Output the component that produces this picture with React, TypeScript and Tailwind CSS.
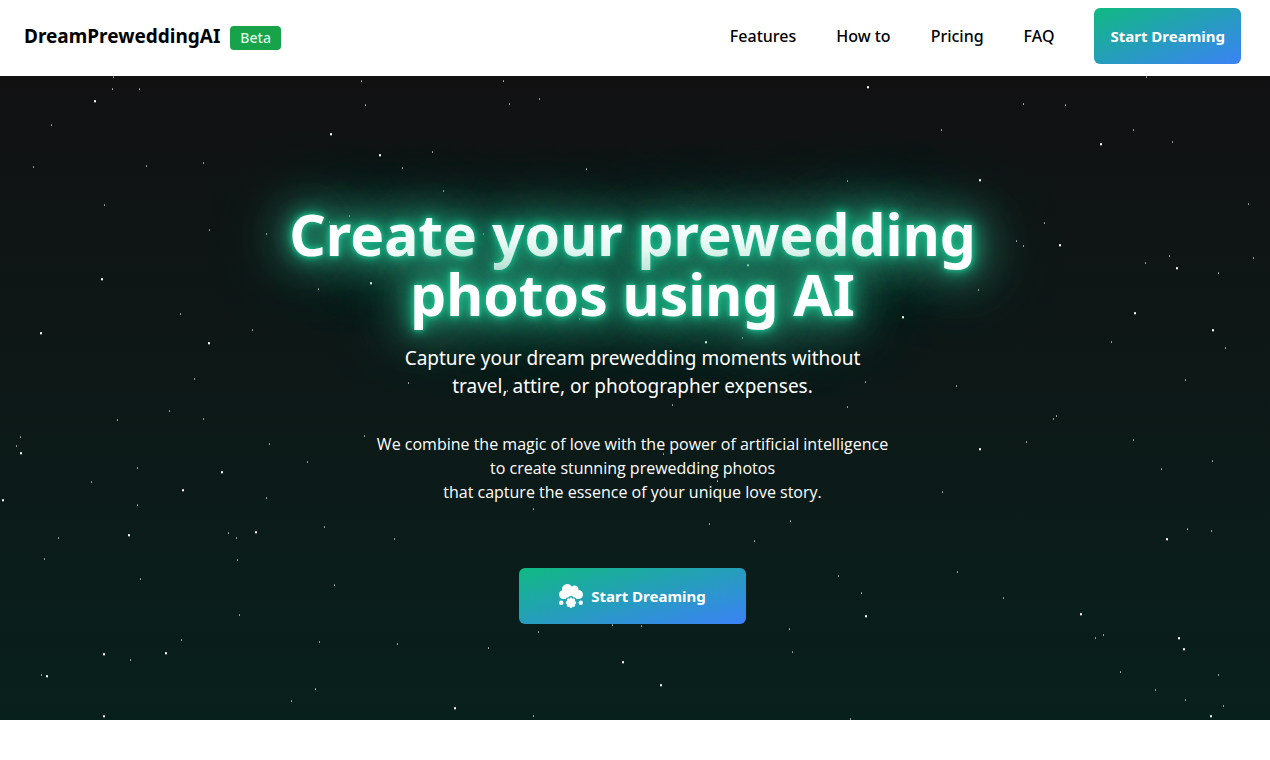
import { FaCloudMeatball } from "react-icons/fa6";

const links = [
  { label: "Features", href: "#features" },
  { label: "How to", href: "#how-to" },
  { label: "Pricing", href: "#pricing" },
  { label: "FAQ", href: "#faq" },
];

// x, y inside the hero
const smallStars = [
  [113, 0], [112, 12], [139, 12], [361, 4], [365, 28], [51, 48], [33, 90], [146, 89], [203, 86], [402, 91],
  [104, 128], [209, 153], [266, 157], [349, 139], [329, 145], [503, 4], [539, 22], [509, 27], [432, 75],
  [586, 92], [443, 114], [483, 157], [579, 242], [318, 212], [1016, 164], [978, 213], [742, 261], [180, 237],
  [252, 253], [194, 302], [408, 306], [169, 334], [203, 342], [117, 343], [20, 360], [16, 369], [269, 367],
  [364, 359], [307, 385], [137, 391], [91, 405], [266, 421], [137, 428], [58, 461], [228, 456], [236, 461],
  [324, 450], [394, 462], [44, 482], [237, 483], [140, 502], [334, 508], [239, 538], [181, 563], [319, 565],
  [397, 567], [130, 583], [41, 598], [315, 612], [291, 624], [1146, 0], [1023, 27], [1065, 28], [941, 53],
  [1133, 53], [1172, 65], [1248, 127], [1044, 146], [1023, 169], [847, 104], [1145, 186], [1169, 179],
  [1218, 196], [1253, 181], [1111, 265], [1225, 271], [865, 305], [956, 309], [1185, 303], [1056, 339],
  [1053, 342], [1026, 365], [1133, 363], [1161, 392], [1212, 384], [942, 415], [1187, 452], [1211, 454],
  [957, 495], [861, 516], [1003, 521], [1095, 561], [1103, 558], [1120, 595], [1155, 613], [1218, 598],
  [1185, 623], [1223, 629], [850, 642], [672, 328], [847, 330], [507, 314], [663, 377], [717, 404],
  [664, 411], [533, 432], [709, 447], [790, 444], [754, 464], [838, 499], [612, 548], [641, 549],
  [538, 555], [488, 571], [789, 552], [792, 575], [533, 639],
];

const bigStars = [
  [94, 24], [330, 57], [379, 78], [747, 188], [902, 240], [705, 265], [101, 202], [208, 266], [40, 256],
  [370, 206], [20, 376], [221, 395], [182, 413], [2, 423], [128, 458], [255, 455], [103, 577], [165, 576],
  [46, 599], [103, 639], [867, 10], [1100, 67], [979, 103], [1059, 168], [1176, 191], [1134, 236],
  [1212, 253], [979, 372], [1166, 462], [865, 539], [1080, 537], [1178, 561], [1183, 572], [1210, 639],
  [622, 585], [660, 608], [454, 631],
];

const Stars = () => (
  <svg className="absolute inset-0 h-full w-full" fill="#fff" shapeRendering="crispEdges" aria-hidden="true">
    {smallStars.map(([x, y]) => (
      <g key={`${x}-${y}`}>
        <rect x={x} y={y} width="1" height="1" opacity="0.5" />
        <rect x={x} y={y + 1} width="1" height="1" opacity="0.6" />
      </g>
    ))}
    {bigStars.map(([x, y]) => (
      <g key={`${x}-${y}`}>
        <rect x={x} y={y} width="2" height="1" opacity="0.8" />
        <rect x={x} y={y + 1} width="2" height="1" />
        <rect x={x} y={y + 2} width="2" height="1" opacity="0.3" />
      </g>
    ))}
  </svg>
);

const Header = () => (
  <header className="flex items-start justify-between bg-white pt-2 pb-3 pl-6 pr-[29px]">
    <div className="flex h-14 items-center gap-[10px]">
      <a href="#" className="text-[19px] leading-7 font-bold">
        DreamPreweddingAI
      </a>
      <span className="mt-1 rounded bg-[#16a34a] px-[10px] text-[14px] leading-6 font-medium text-[#dcfce7]">
        Beta
      </span>
    </div>
    <nav className="flex items-center gap-10 font-medium">
      {links.map(({ label, href }) => (
        <a key={label} href={href}>
          {label}
        </a>
      ))}
      <button
        type="button"
        className="h-14 rounded-md bg-linear-to-br/srgb from-[#10b981] to-[#3b82f6] px-4 text-[15px] font-bold text-white"
      >
        Start Dreaming
      </button>
    </nav>
  </header>
);

const Hero = () => (
  <section className="relative overflow-hidden bg-linear-to-b/srgb from-[#111112] to-[#08201c] text-white">
    <Stars />
    <div className="relative flex flex-col items-center pt-32 pb-24 pl-4 pr-[21px] text-center">
      <h1 className="max-w-3xl text-[57px] leading-[60px] font-bold [text-shadow:0_0_5px_#1fb98a,0_0_10px_#1fb98a,0_0_20px_#1fb98a,0_0_40px_#30b48e,0_0_60px_#40a888,0_0_80px_#40b08c]">
        Create your prewedding <br /> photos using AI
      </h1>
      <p className="mt-5 text-[19px] leading-7">
        Capture your dream prewedding moments without
        <br />
        travel, attire, or photographer expenses.
      </p>
      <p className="mt-8 font-['Open_Sans','Noto_Sans',sans-serif] text-base">
        We combine the magic of love with the power of artificial intelligence
        <br />
        to create stunning prewedding photos
        <br />
        that capture the essence of your unique love story.
      </p>
      <button
        type="button"
        className="mt-16 flex h-14 items-center gap-2 rounded-md bg-linear-to-br/srgb from-[#10b981] to-[#3b82f6] px-10 text-[15px] font-bold"
      >
        <FaCloudMeatball className="h-6 w-6" />
        Start Dreaming
      </button>
    </div>
  </section>
);

const App = () => {
  return (
    <div className="bg-white pb-10 font-['Noto_Sans',sans-serif] text-black">
      <Header />
      <Hero />
    </div>
  );
};

export default App;
